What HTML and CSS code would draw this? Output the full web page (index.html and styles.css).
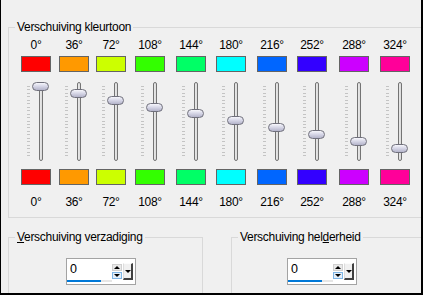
FILE: index.html
```html
<!DOCTYPE html>
<html lang="nl">

<head>
  <meta charset="UTF-8">
  <meta name="viewport" content="width=device-width, initial-scale=1.0">
  <title>Kleurtoon</title>
  <link rel="stylesheet" href="styles.css">
</head>

<body>

  <fieldset class="group hue-group">
    <legend>Verschuiving kleurtoon</legend>
    <div class="hues">
      <div class="hue-col" style="--c:#ff0000;--p:0">
        <span class="deg">0°</span>
        <span class="swatch"></span>
        <div class="slider"><span class="ticks"></span><span class="track"></span><span class="thumb"></span></div>
        <span class="swatch"></span>
        <span class="deg">0°</span>
      </div>
      <div class="hue-col" style="--c:#ff9900;--p:1">
        <span class="deg">36°</span>
        <span class="swatch"></span>
        <div class="slider"><span class="ticks"></span><span class="track"></span><span class="thumb"></span></div>
        <span class="swatch"></span>
        <span class="deg">36°</span>
      </div>
      <div class="hue-col" style="--c:#ccff00;--p:2">
        <span class="deg">72°</span>
        <span class="swatch"></span>
        <div class="slider"><span class="ticks"></span><span class="track"></span><span class="thumb"></span></div>
        <span class="swatch"></span>
        <span class="deg">72°</span>
      </div>
      <div class="hue-col" style="--c:#33ff00;--p:3">
        <span class="deg">108°</span>
        <span class="swatch"></span>
        <div class="slider"><span class="ticks"></span><span class="track"></span><span class="thumb"></span></div>
        <span class="swatch"></span>
        <span class="deg">108°</span>
      </div>
      <div class="hue-col" style="--c:#00ff66;--p:4">
        <span class="deg">144°</span>
        <span class="swatch"></span>
        <div class="slider"><span class="ticks"></span><span class="track"></span><span class="thumb"></span></div>
        <span class="swatch"></span>
        <span class="deg">144°</span>
      </div>
      <div class="hue-col" style="--c:#00ffff;--p:5">
        <span class="deg">180°</span>
        <span class="swatch"></span>
        <div class="slider"><span class="ticks"></span><span class="track"></span><span class="thumb"></span></div>
        <span class="swatch"></span>
        <span class="deg">180°</span>
      </div>
      <div class="hue-col" style="--c:#0066ff;--p:6">
        <span class="deg">216°</span>
        <span class="swatch"></span>
        <div class="slider"><span class="ticks"></span><span class="track"></span><span class="thumb"></span></div>
        <span class="swatch"></span>
        <span class="deg">216°</span>
      </div>
      <div class="hue-col" style="--c:#3300ff;--p:7">
        <span class="deg">252°</span>
        <span class="swatch"></span>
        <div class="slider"><span class="ticks"></span><span class="track"></span><span class="thumb"></span></div>
        <span class="swatch"></span>
        <span class="deg">252°</span>
      </div>
      <div class="hue-col" style="--c:#cc00ff;--p:8">
        <span class="deg">288°</span>
        <span class="swatch"></span>
        <div class="slider"><span class="ticks"></span><span class="track"></span><span class="thumb"></span></div>
        <span class="swatch"></span>
        <span class="deg">288°</span>
      </div>
      <div class="hue-col" style="--c:#ff0099;--p:9">
        <span class="deg">324°</span>
        <span class="swatch"></span>
        <div class="slider"><span class="ticks"></span><span class="track"></span><span class="thumb"></span></div>
        <span class="swatch"></span>
        <span class="deg">324°</span>
      </div>
    </div>
  </fieldset>

  <div class="bottom">
    <fieldset class="group sat-group">
      <legend><u>V</u>erschuiving verzadiging</legend>
      <div class="spin">
        <div class="spin-field">
          <span class="spin-val">0</span>
          <span class="spin-bar"><span class="spin-fill"></span></span>
        </div>
        <div class="spin-btns">
          <span class="spin-up"></span>
          <span class="spin-down"></span>
        </div>
        <span class="spin-drop"></span>
      </div>
    </fieldset>

    <fieldset class="group light-group">
      <legend>Verschuiving hel<u>d</u>erheid</legend>
      <div class="spin">
        <div class="spin-field">
          <span class="spin-val">0</span>
          <span class="spin-bar"><span class="spin-fill"></span></span>
        </div>
        <div class="spin-btns">
          <span class="spin-up"></span>
          <span class="spin-down"></span>
        </div>
        <span class="spin-drop"></span>
      </div>
    </fieldset>
  </div>

</body>

</html>
```

FILE: styles.css
```css
* {
  margin: 0;
  padding: 0;
  box-sizing: border-box;
}

html,
body {
  width: 100%;
  height: 100%;
}

body {
  height: 295px;
  background: #f0f0f0;
  border-left: 1px solid #000;
  border-right: 2px solid #000;
  border-bottom: 2px solid #000;
  overflow: hidden;
  font-family: "Liberation Sans", Arial, sans-serif;
  font-size: 12px;
  letter-spacing: -0.3px;
  color: #000;
}

.group {
  border: 1px solid #d9d9d9;
  padding: 0 0 0 6px;
}

.group legend {
  padding: 0 2px;
  line-height: 14px;
}

/* kleurtoon: frame runs on past the right edge */
.hue-group {
  margin: 20px 0 0 7px;
  padding-top: 4px;
  padding-bottom: 8px;
  border-right: none;
}

.hues {
  display: grid;
  grid-template-columns: 38px 37px 39px 41px 40px 41px 40px 42px 41px 40px;
  margin-left: 6px;
}

.hue-col {
  width: 30px;
  display: flex;
  flex-direction: column;
  align-items: center;
}

.deg {
  line-height: 14px;
  white-space: nowrap;
}

.swatch {
  width: 30px;
  height: 16px;
  border: 1px solid #646464;
  background: var(--c);
  margin: 4px 0 10px;
}

.slider + .swatch {
  margin: 8px 0 10px;
}

.slider {
  position: relative;
  width: 30px;
  height: 79px;
  display: flex;
  align-items: flex-start;
  padding-left: 6px;
}

.ticks {
  width: 3px;
  height: 70px;
  margin-top: 4px;
  background: repeating-linear-gradient(to bottom, #c4c4c4 0 1px, transparent 1px 3.45px);
}

.track {
  width: 4px;
  height: 79px;
  margin-left: 9px;
  border: 1px solid #747474;
  border-radius: 2px;
  background: linear-gradient(to right, #d4d4d4, #f6f6f6, #c8c8c8);
}

.thumb {
  position: absolute;
  left: 11px;
  top: calc(var(--p) * 6.87px);
  width: 17px;
  height: 9px;
  border: 1px solid #70707c;
  border-radius: 5px;
  background: linear-gradient(to bottom, #f6f6fb 0%, #d8d8e8 45%, #b4b4ca 100%);
}

/* verzadiging / helderheid */
.bottom {
  display: flex;
  margin-top: 12px;
}

.sat-group {
  width: 195px;
  margin-left: 7px;
  padding-top: 14px;
  padding-bottom: 20px;
  flex-shrink: 0;
}

.light-group {
  flex: 1;
  margin-left: 28px;
  padding-top: 14px;
  padding-bottom: 20px;
  border-right: none;
}

.sat-group .spin {
  margin-left: 51px;
}

.light-group .spin {
  margin-left: 49px;
}

.spin {
  width: 70px;
  height: 27px;
  display: flex;
  border: 1px solid #a3a3a3;
  background: #fff;
}

.spin-field {
  width: 45px;
  display: flex;
  flex-direction: column;
  padding-top: 1px;
}

.spin-val {
  line-height: 18px;
  padding-left: 3px;
  font-size: 12.5px;
}

.spin-bar {
  height: 2px;
  margin-top: 2px;
  background: #e6e6e6;
}

.spin-fill {
  display: block;
  width: 34px;
  height: 2px;
  background: #0078d7;
}

.spin-btns {
  width: 10px;
  margin-top: 5px;
  display: flex;
  flex-direction: column;
  gap: 1px;
}

.spin-up,
.spin-down {
  height: 7px;
  display: flex;
  align-items: center;
  justify-content: center;
  background: #e9e9e9;
  border: 1px solid #d0d0d0;
}

.spin-down {
  background: #e3eef9;
  border-color: #7fb6e6;
}

.spin-up::after {
  content: "";
  border-left: 3px solid transparent;
  border-right: 3px solid transparent;
  border-bottom: 3px solid #000;
}

.spin-down::after {
  content: "";
  border-left: 3px solid transparent;
  border-right: 3px solid transparent;
  border-top: 3px solid #000;
}

.spin-drop {
  width: 10px;
  height: 17px;
  margin: 4px 0 0 1px;
  display: flex;
  align-items: center;
  justify-content: center;
  background: #f0f0f0;
  border-top: 1px solid #fcfcfc;
  border-left: 1px solid #dcdcdc;
  border-right: 2px solid #404040;
  border-bottom: 2px solid #404040;
}

.spin-drop::after {
  content: "";
  border-left: 3px solid transparent;
  border-right: 3px solid transparent;
  border-top: 3px solid #000;
}
```
